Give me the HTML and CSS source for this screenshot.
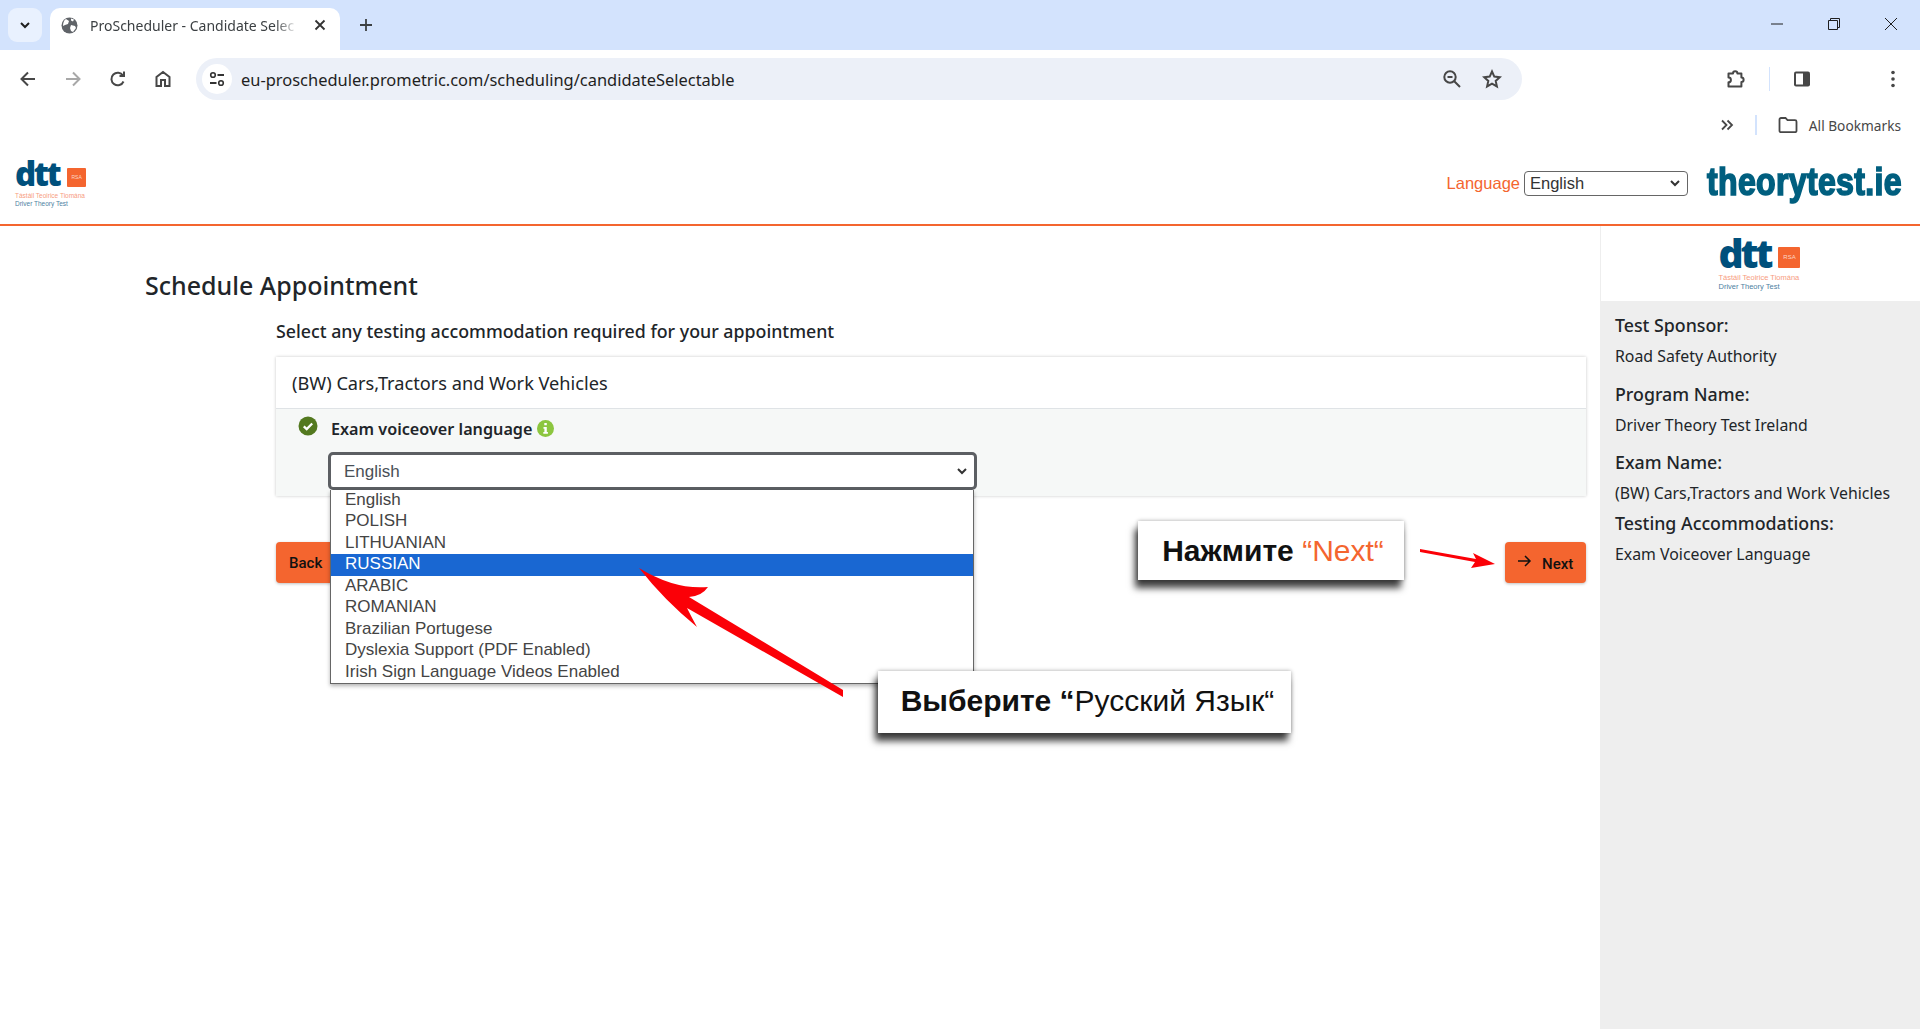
FILE: index.html
```html
<!DOCTYPE html>
<html lang="en">
<head>
  <meta charset="UTF-8">
  <meta name="viewport" content="width=device-width, initial-scale=1">
  <title>ProScheduler - Candidate Selectable</title>
  <link rel="stylesheet" href="styles.css">
</head>
<body>

<div class="tabstrip">
  <div class="tab-search">
    <svg width="14" height="14" viewBox="0 0 14 14"><path d="M3 5l4 4 4-4" fill="none" stroke="#1f1f1f" stroke-width="2"/></svg>
  </div>
  <div class="tab">
    <svg class="favicon" width="17" height="17" viewBox="0 0 17 17"><circle cx="8.5" cy="8.5" r="8" fill="#5f6368"/><path d="M5 2l3 2-1 3-3 1-2 1c0-3 1-6 3-7zM10 8l4 1 1 2-3 4-2-1-1-3zM10 1.500l3 1-1 2-2-1z" fill="#fff"/></svg>
    <span class="tab-title">ProScheduler - Candidate Selec</span>
    <svg width="12" height="12" viewBox="0 0 12 12"><path d="M1.500 1.500l9 9M10.500 1.500l-9 9" stroke="#333" stroke-width="1.800"/></svg>
  </div>
  <svg class="new-tab" width="14" height="14" viewBox="0 0 14 14"><path d="M7 1v12M1 7h12" stroke="#3c4043" stroke-width="1.800"/></svg>
  <div class="window-btns">
    <svg width="14" height="14" viewBox="0 0 14 14"><path d="M1 7h12" stroke="#1f1f1f"/></svg>
    <svg width="14" height="14" viewBox="0 0 14 14"><path d="M1.500 3.500h9v9h-9zM3.500 3.500v-2h9v9h-2" fill="none" stroke="#1f1f1f"/></svg>
    <svg width="14" height="14" viewBox="0 0 14 14"><path d="M1 1l12 12M13 1L1 13" stroke="#1f1f1f"/></svg>
  </div>
</div>

<div class="toolbar">
  <div class="nav-btns">
    <svg width="20" height="20" viewBox="0 0 20 20"><path d="M17 10H4M10 3.500L3.500 10l6.500 6.500" fill="none" stroke="#474747" stroke-width="2"/></svg>
    <svg width="20" height="20" viewBox="0 0 20 20"><path d="M3 10h13M10 3.500l6.500 6.500-6.500 6.500" fill="none" stroke="#a8a8a8" stroke-width="2"/></svg>
    <svg width="20" height="20" viewBox="0 0 20 20"><path d="M15.500 12.500a6.300 6.300 0 1 1-.5-6M16 2.500V7h-4.500" fill="none" stroke="#474747" stroke-width="2"/></svg>
    <svg width="20" height="20" viewBox="0 0 20 20"><path d="M3.500 17V8L10 3l6.500 5v9h-4.500v-6H8v6z" fill="none" stroke="#474747" stroke-width="2"/></svg>
  </div>
  <div class="omnibox">
    <div class="site-info">
      <svg width="18" height="18" viewBox="0 0 18 18"><circle cx="5" cy="5" r="2.300" fill="none" stroke="#333" stroke-width="1.600"/><path d="M9.500 5H16M2 13h6.500" stroke="#333" stroke-width="1.800"/><circle cx="13" cy="13" r="2.300" fill="none" stroke="#333" stroke-width="1.600"/></svg>
    </div>
    <span class="url">eu-proscheduler.prometric.com/scheduling/candidateSelectable</span>
    <svg class="zoom-icon" width="20" height="20" viewBox="0 0 20 20"><circle cx="8" cy="8" r="5.700" fill="none" stroke="#474747" stroke-width="2"/><path d="M12 12l6 6M5.500 8h5" stroke="#474747" stroke-width="2"/></svg>
    <svg width="20" height="20" viewBox="0 0 20 20"><path d="M10 2.500l2.300 5.100 5.500.6-4.100 3.700 1.200 5.500L10 14.600l-4.900 2.800 1.200-5.500-4.100-3.700 5.500-.6z" fill="none" stroke="#474747" stroke-width="2"/></svg>
  </div>
  <div class="tool-btns">
    <svg width="20" height="20" viewBox="0 0 20 20"><path d="M2.500 17.500v-4.200a2.400 2.400 0 0 0 0-4.800V4.500H7a2.200 2.200 0 0 1 4.400 0h4v4a2.200 2.200 0 0 1 0 4.400v4.600z" fill="none" stroke="#474747" stroke-width="2" stroke-linejoin="round"/></svg>
    <span class="tool-sep"></span>
    <svg width="20" height="20" viewBox="0 0 20 20"><rect x="2" y="2.500" width="16" height="15" rx="2" fill="#474747"/><rect x="4" y="4.500" width="7" height="11" fill="#fff"/></svg>
    <svg class="dots" width="6" height="20" viewBox="0 0 6 20"><circle cx="3" cy="3.500" r="1.800" fill="#474747"/><circle cx="3" cy="10" r="1.800" fill="#474747"/><circle cx="3" cy="16.500" r="1.800" fill="#474747"/></svg>
  </div>
</div>

<div class="bookmarks">
  <svg width="14" height="14" viewBox="0 0 14 14"><path d="M2 2.500L6.500 7 2 11.500M7.500 2.500L12 7l-4.500 4.500" fill="none" stroke="#474747" stroke-width="1.800"/></svg>
  <span class="book-sep"></span>
  <svg class="folder" width="20" height="18" viewBox="0 0 20 18"><path d="M1.500 3.500a1.500 1.500 0 0 1 1.500-1.500h4.500l2 2.200H17a1.500 1.500 0 0 1 1.500 1.500v9a1.500 1.500 0 0 1-1.500 1.500H3a1.500 1.500 0 0 1-1.500-1.500z" fill="none" stroke="#474747" stroke-width="1.800"/></svg>
  <span>All Bookmarks</span>
</div>

<header class="site-header">
  <div class="logo logo-small">
    <div class="logo-top"><span class="logo-dtt">dtt</span><span class="logo-rsa">RSA</span></div>
    <div class="logo-ga">Tástáil Teoirice Tiomána</div>
    <div class="logo-en">Driver Theory Test</div>
  </div>
  <div class="header-right">
    <label class="lang-label" for="lang">Language</label>
    <select id="lang" class="lang-select"><option>English</option></select>
    <span class="brand"><span class="brand-text">theorytest.ie</span></span>
  </div>
</header>

<div class="page">
  <main class="main">
    <h1>Schedule Appointment</h1>
    <div class="content">
      <p class="intro">Select any testing accommodation required for your appointment</p>
      <section class="card">
        <div class="card-head">(BW) Cars,Tractors and Work Vehicles</div>
        <div class="card-body">
          <div class="acc-row">
            <svg class="check" width="20" height="20" viewBox="0 0 20 20"><circle cx="10" cy="10" r="9.500" fill="#53791f"/><path d="M5.800 10.300l2.900 2.800 5.500-5.600" fill="none" stroke="#fff" stroke-width="2.300"/></svg>
            <strong>Exam voiceover language</strong>
            <svg class="info" width="17" height="17" viewBox="0 0 17 17"><circle cx="8.500" cy="8.500" r="8.500" fill="#8cc63f"/><path d="M7.300 3h2.500v2.300H7.300zM6.500 7h3.300v5h1.100v1.800H6.300V12h1.100V8.800h-.9z" fill="#fff"/></svg>
          </div>
          <select class="voice-select"><option>English</option></select>
        </div>
      </section>
      <div class="actions">
        <button class="btn btn-back">Back</button>
        <button class="btn btn-next">
          <svg width="15" height="14" viewBox="0 0 15 14"><path d="M1 7h12M8 2l5 5-5 5" fill="none" stroke="#111" stroke-width="1.500"/></svg>
          Next
        </button>
      </div>
    </div>
  </main>

  <aside class="sidebar">
    <div class="side-logo">
      <div class="logo logo-big">
        <div class="logo-top"><span class="logo-dtt">dtt</span><span class="logo-rsa">RSA</span></div>
        <div class="logo-ga">Tástáil Teoirice Tiomána</div>
        <div class="logo-en">Driver Theory Test</div>
      </div>
    </div>
    <div class="side-info">
      <h4>Test Sponsor:</h4>
      <p>Road Safety Authority</p>
      <h4>Program Name:</h4>
      <p>Driver Theory Test Ireland</p>
      <h4>Exam Name:</h4>
      <p class="tight">(BW) Cars,Tractors and Work Vehicles</p>
      <h4>Testing Accommodations:</h4>
      <p>Exam Voiceover Language</p>
    </div>
  </aside>
</div>

<ul class="dropdown">
  <li>English</li>
  <li>POLISH</li>
  <li>LITHUANIAN</li>
  <li class="picked">RUSSIAN</li>
  <li>ARABIC</li>
  <li>ROMANIAN</li>
  <li>Brazilian Portugese</li>
  <li>Dyslexia Support (PDF Enabled)</li>
  <li>Irish Sign Language Videos Enabled</li>
</ul>

<svg class="arrows" width="1920" height="1029" viewBox="0 0 1920 1029">
  <path d="M639 568Q675 590 708 587Q702 596 689 597L843 690L843 697L687 608Q692 618 697 627Q664 600 639 568Z" fill="#fb0007"/>
  <path d="M1420 549L1476 559L1473 553L1495 564L1471 568L1475 562L1420 552Z" fill="#fb0007"/>
</svg>

<div class="note note-next"><span><b>Нажмите</b> <span class="orange">“Next“</span></span></div>
<div class="note note-lang"><span><b>Выберите “</b>Русский Язык“</span></div>

</body>
</html>
```

FILE: styles.css
```css
* { box-sizing: border-box; }
html, body { height: 100%; }
body {
  margin: 0;
  background: #fff;
  font-family: "Noto Sans", sans-serif;
  color: #212529;
  overflow: hidden;
  position: relative;
}

/* browser chrome */
.tabstrip {
  height: 50px;
  background: #d3e3fd;
  display: flex;
  align-items: flex-end;
  padding-left: 8px;
}
.tab-search {
  width: 34px;
  height: 34px;
  margin-bottom: 8px;
  background: #e9f1fe;
  border-radius: 9px;
  display: flex;
  align-items: center;
  justify-content: center;
}
.tab {
  width: 290px;
  height: 42px;
  margin-left: 8px;
  background: #fff;
  border-radius: 10px 10px 0 0;
  display: flex;
  align-items: center;
  padding: 0 14px 8px 11px;
  font-size: 14px;
  color: #3c4043;
}
.tab-title {
  flex: 1;
  margin-left: 12px;
  white-space: nowrap;
  overflow: hidden;
  -webkit-mask-image: linear-gradient(to right, #000 88%, transparent 99%);
  mask-image: linear-gradient(to right, #000 88%, transparent 99%);
  margin-right: 14px;
}
.new-tab { margin: 0 0 18px 19px; }
.window-btns {
  margin-left: auto;
  display: flex;
  gap: 43px;
  padding: 0 22px 19px 0;
}
.toolbar {
  height: 55px;
  background: #fff;
  border-radius: 10px 10px 0 0;
  display: flex;
  align-items: flex-start;
  padding: 8px 0 0 18px;
  position: relative;
}
.nav-btns {
  display: flex;
  gap: 25px;
  height: 42px;
  align-items: center;
  width: 178px;
}
.omnibox {
  width: 1326px;
  height: 42px;
  background: #ecf0f8;
  border-radius: 21px;
  display: flex;
  align-items: center;
  padding: 0 20px 0 6px;
}
.site-info {
  width: 30px;
  height: 30px;
  background: #fff;
  border-radius: 50%;
  display: flex;
  align-items: center;
  justify-content: center;
  margin-right: 9px;
}
.url {
  flex: 1;
  font-size: 16.450px;
  color: #1f1f1f;
}
.zoom-icon { margin-right: 20px; }
.tool-btns {
  display: flex;
  align-items: center;
  height: 42px;
  margin-left: 204px;
}
.tool-sep {
  width: 1px;
  height: 24px;
  background: #d3e3fd;
  margin: 0 22px 0 23px;
}
.dots { margin-left: 78px; }
.bookmarks {
  height: 40px;
  display: flex;
  align-items: center;
  justify-content: flex-end;
  padding-right: 19px;
  font-size: 13.700px;
  color: #474747;
}
.book-sep {
  width: 2px;
  height: 20px;
  background: #d3e3fd;
  margin: 0 21px;
}
.folder { margin-right: 11px; }

/* logo */
.logo { display: flex; flex-direction: column; }
.logo-top { display: flex; align-items: flex-end; }
.logo-dtt {
  font-family: "Open Sans", sans-serif;
  font-weight: 800;
  color: #00507c;
}
.logo-rsa {
  background: #f4652f;
  color: #fbd6c6;
  border-radius: 1px;
  text-align: center;
  font-family: "Liberation Sans", sans-serif;
}
.logo-ga { color: #f79d7f; font-family: "Liberation Sans", sans-serif; white-space: nowrap; }
.logo-en { color: #4e7f9f; font-family: "Liberation Sans", sans-serif; white-space: nowrap; }
.logo-small { width: 74px; padding-top: 8px; }
.logo-small .logo-dtt { font-size: 33px; line-height: 26px; height: 26px; display: block; letter-spacing: -2.500px; }
.logo-small .logo-rsa { width: 19px; height: 19px; font-size: 5px; line-height: 19px; margin-left: 8px; }
.logo-small .logo-ga { font-size: 6.500px; line-height: 8px; margin-top: 5px; }
.logo-small .logo-en { font-size: 6.500px; line-height: 8px; }
.logo-big { width: 90px; }
.logo-big .logo-dtt { font-size: 39px; line-height: 30px; height: 30px; display: block; letter-spacing: -3px; }
.logo-big .logo-rsa { width: 22px; height: 21px; font-size: 6px; line-height: 21px; margin-left: 8px; }
.logo-big .logo-ga { font-size: 7.500px; line-height: 9px; margin-top: 5px; }
.logo-big .logo-en { font-size: 7.500px; line-height: 9px; }

/* site header */
.site-header {
  height: 81px;
  border-bottom: 2px solid #f4652f;
  display: flex;
  justify-content: space-between;
  padding: 8px 19px 0 15px;
}
.header-right {
  display: flex;
  align-items: center;
  height: 56px;
  margin-top: 2px;
}
.lang-label {
  font-family: "Liberation Sans", sans-serif;
  font-size: 16.500px;
  color: #f4652f;
  margin-right: 4px;
}
.lang-select,
.voice-select {
  appearance: none;
  background: #fff url("data:image/svg+xml,%3Csvg xmlns='http://www.w3.org/2000/svg' width='10' height='7'%3E%3Cpath d='M1 1l4 4 4-4' fill='none' stroke='%23333' stroke-width='2'/%3E%3C/svg%3E") no-repeat right 7px center;
}
.lang-select {
  width: 164px;
  height: 25px;
  padding-left: 5px;
  font-family: "Liberation Sans", sans-serif;
  font-size: 16.500px;
  color: #333;
  border: 1px solid #666;
  border-radius: 4px;
  margin-right: 19px;
}
.brand {
  width: 194px;
  height: 42px;
  margin-top: -2px;
  white-space: nowrap;
}
.brand-text {
  display: inline-block;
  transform: scaleX(.843);
  transform-origin: left center;
  font-family: "Liberation Sans", sans-serif;
  font-weight: 700;
  font-size: 38px;
  line-height: 42px;
  color: #005f7f;
  -webkit-text-stroke: 1.700px #005f7f;
  letter-spacing: .4px;
}

/* page */
.page {
  display: flex;
  height: 803px;
}
.main {
  width: 1600px;
  padding: 44px 14px 0 145px;
}
h1 {
  margin: 0;
  font-size: 25px;
  line-height: 30px;
  font-weight: 500;
  color: #212529;
}
.content { margin-left: 131px; }
.intro {
  margin: 18px 0 13px;
  font-size: 17.800px;
  line-height: 26px;
  font-weight: 500;
}
.card {
  box-shadow: 0 0 3px rgba(0, 0, 0, .22);
}
.card-head {
  height: 52px;
  padding: 0 16px;
  display: flex;
  align-items: center;
  font-size: 18.200px;
  background: #fff;
  border-bottom: 1px solid #dfe3e6;
}
.card-body {
  height: 87px;
  background: #f6f8f7;
  padding: 7px 0 0 23px;
}
.acc-row {
  display: flex;
  align-items: center;
  height: 26px;
  font-size: 16.200px;
}
.check { margin: -6px 13px 0 -1px; }
.info { margin-left: 5px; margin-top: -1px; }
.acc-row strong { font-weight: 600; }
.voice-select {
  display: block;
  width: 649px;
  height: 38px;
  margin: 10px 0 0 29px;
  padding-left: 13px;
  font-family: "Liberation Sans", sans-serif;
  font-size: 17px;
  color: #495057;
  border: 3px solid #5c5f63;
  border-radius: 5px;
}
.actions {
  display: flex;
  justify-content: space-between;
  margin-top: 46px;
}
.btn {
  height: 41px;
  border: 0;
  border-radius: 4px;
  background: #f4652f;
  color: #111;
  font-family: Roboto, sans-serif;
  font-size: 15px;
  font-weight: 500;
  box-shadow: 0 1px 3px rgba(0, 0, 0, .25);
  display: flex;
  align-items: center;
}
.btn-back { width: 70px; padding: 0 0 0 13px; }
.btn-next { width: 81px; padding: 2px 11px 0 12px; gap: 10px; }
.btn-next svg { margin-top: -6px; }

/* sidebar */
.sidebar {
  width: 320px;
  background: #eee;
}
.side-logo {
  height: 75px;
  background: #fff;
  display: flex;
  justify-content: center;
  padding: 12px 0 0 6px;
  border-left: 1px solid #eee;
}
.side-info { padding: 11px 10px 0 15px; }
h4 {
  margin: 0;
  font-size: 17.800px;
  line-height: 26px;
  font-weight: 500;
  color: #212529;
}
.side-info p {
  margin: 5px 0 11.500px;
  font-size: 15.850px;
  line-height: 26px;
  color: #212529;
}
.side-info p.tight { margin-bottom: 4px; }

/* open select list */
.dropdown {
  position: absolute;
  left: 330px;
  top: 490px;
  width: 644px;
  height: 194px;
  margin: 0;
  padding: 0;
  list-style: none;
  background: #fff;
  border: 1px solid #666;
  border-top: 0;
  box-shadow: 0 2px 4px rgba(0, 0, 0, .3);
  font-family: "Liberation Sans", sans-serif;
  font-size: 17px;
  color: #444;
}
.dropdown li {
  height: 21.450px;
  line-height: 20.500px;
  padding-left: 14px;
  white-space: nowrap;
}
.dropdown .picked { background: #1967d2; color: #fff; }

/* tutorial annotations */
.arrows { position: absolute; left: 0; top: 0; pointer-events: none; }
.note {
  position: absolute;
  background: #fff;
  display: flex;
  align-items: center;
  justify-content: center;
  white-space: pre;
  font-family: "Liberation Sans", sans-serif;
  font-size: 30px;
  color: #111;
  box-shadow: -3px 8px 7px rgba(0, 0, 0, .75), 0 0 4px rgba(0, 0, 0, .35);
}
.note-next { left: 1138px; top: 521px; width: 266px; height: 59px; padding-left: 4px; }
.note-lang { left: 878px; top: 671px; width: 413px; height: 62px; padding: 0 0 3px 6px; }
.orange { color: #f4652f; }
```
